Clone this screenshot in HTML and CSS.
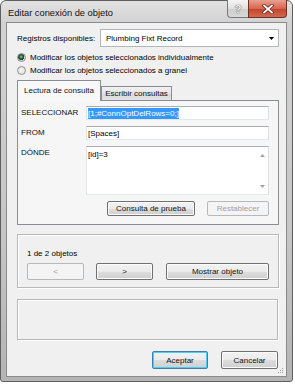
FILE: index.html
```html
<!DOCTYPE html>
<html lang="es">
  <head>
    <meta charset="UTF-8" />
    <title>Editar conexión de objeto</title>
    <link rel="stylesheet" href="styles.css">
  </head>
  <body>
    <div class="window">
      <div class="titlebar">
        <span class="title">Editar conexión de objeto</span>
        <div class="caption_buttons">
          <div class="caption help">?</div>
          <div class="caption close">
            <svg viewBox="0 0 14 10" width="14" height="10">
              <path d="M3 1.5l8 7M11 1.5l-8 7" stroke="#6b2a20" stroke-width="3.4" stroke-linecap="square" />
              <path d="M3 1.5l8 7M11 1.5l-8 7" stroke="#fff" stroke-width="1.8" stroke-linecap="square" />
            </svg>
          </div>
        </div>
      </div>

      <div class="client">
        <div class="source_row">
          <span>Registros disponibles:</span>
          <div class="combo">
            <span>Plumbing Fixt Record</span>
            <svg viewBox="0 0 5 3" width="5" height="3"><path d="M0 0h5L2.5 3z" fill="#000" /></svg>
          </div>
        </div>

        <div class="radios">
          <label class="radio"><span class="radio_dot checked"></span>Modificar los objetos seleccionados individualmente</label>
          <label class="radio"><span class="radio_dot"></span>Modificar los objetos seleccionados a granel</label>
        </div>

        <div class="tabs">
          <div class="tab active">Lectura de consulta</div>
          <div class="tab">Escribir consultas</div>
        </div>
        <div class="tab_panel">
          <div class="query_grid">
            <span class="query_label">SELECCIONAR</span>
            <div class="textbox"><span class="selection">[1;#ConnOptDelRows=0;]</span></div>
            <span class="query_label">FROM</span>
            <div class="textbox">[Spaces]</div>
            <span class="query_label">DÓNDE</span>
            <div class="textbox multiline">
              <span>[id]=3</span>
              <div class="scroll">
                <svg viewBox="0 0 5 3" width="5" height="3"><path d="M0 3h5L2.5 0z" fill="#a3a3a3" /></svg>
                <svg viewBox="0 0 5 3" width="5" height="3"><path d="M0 0h5L2.5 3z" fill="#a3a3a3" /></svg>
              </div>
            </div>
          </div>
          <div class="panel_buttons">
            <div class="button test">Consulta de prueba</div>
            <div class="button reset disabled">Restablecer</div>
          </div>
        </div>

        <div class="group nav_group">
          <div class="count">1 de 2 objetos</div>
          <div class="nav_buttons">
            <div class="button prev disabled">&lt;</div>
            <div class="button next">&gt;</div>
            <div class="button show">Mostrar objeto</div>
          </div>
        </div>

        <div class="group empty_group"></div>

        <div class="dialog_buttons">
          <div class="button ok default">Aceptar</div>
          <div class="button cancel">Cancelar</div>
        </div>

        <div class="grip">
          <svg viewBox="0 0 6 6" width="6" height="6">
            <path d="M4 0h1v1H4zM2 2h1v1H2zM4 2h1v1H4zM0 4h1v1H0zM2 4h1v1H2zM4 4h1v1H4z" fill="#a0a0a0" />
          </svg>
        </div>
      </div>
    </div>
  </body>
</html>
```

FILE: styles.css
```css
* {
  box-sizing: border-box;
  padding: 0;
  margin: 0;
}
body {
  background: #fff;
  font-family: "Liberation Sans", Arial, sans-serif;
  font-size: 8px;
  color: #000;
}
.window {
  width: 293px;
  height: 382px;
  display: flex;
  flex-direction: column;
  padding: 0 5px 4px;
  border: 1px solid #5f5f5f;
  border-radius: 6px 6px 3px 3px;
  background: linear-gradient(#e2e2e2, #d2d2d2 22px, #c6c6c6 60%, #b4b4b4);
}
.titlebar {
  height: 21px;
  display: flex;
  justify-content: space-between;
  align-items: flex-start;
}
.title {
  padding: 6px 0 0 2px;
  font-size: 9.3px;
  line-height: 12px;
  color: #111;
}
.caption_buttons {
  display: flex;
  margin-top: -1px;
}
.caption {
  height: 18px;
  display: flex;
  justify-content: center;
  align-items: center;
  border: 1px solid #7a7a7a;
  border-top: none;
}
.caption.help {
  width: 21px;
  border-right: none;
  border-radius: 0 0 0 4px;
  background: linear-gradient(#f4f4f4, #e0e0e0 50%, #cdcdcd 51%, #d8d8d8);
  font-size: 11px;
  font-weight: bold;
  color: #f4f4f4;
  text-shadow: 0 0 1px #555, 0 0 1px #555;
}
.caption.close {
  width: 39px;
  border-color: #6e2e24;
  border-radius: 0 0 4px 0;
  background: linear-gradient(#e9a08f, #d7664f 50%, #c4412a 51%, #d26a4f);
}
.client {
  flex: 1;
  position: relative;
  display: flex;
  flex-direction: column;
  padding: 6px 7px 0 10px;
  border: 1px solid #8a8a8a;
  background: #f0f0f0;
}
.source_row {
  height: 18px;
  display: flex;
  justify-content: space-between;
  align-items: center;
}
.combo {
  width: 179px;
  height: 18px;
  display: flex;
  justify-content: space-between;
  align-items: center;
  padding: 0 4px 0 5px;
  border: 1px solid #b3b6bb;
  background: #fff;
}
.radios {
  margin-top: 4px;
  display: flex;
  flex-direction: column;
}
.radio {
  height: 13px;
  display: flex;
  align-items: center;
  gap: 4px;
}
.radio_dot {
  width: 9px;
  height: 9px;
  border: 1px solid #8b8d90;
  border-radius: 50%;
  background: radial-gradient(#f6f6f6, #dcdcdc);
}
.radio_dot.checked {
  background: radial-gradient(circle at 45% 40%, #9fd98a 0, #2d6e2f 1.6px, #1f3c5a 3px, #dcdcdc 3.4px);
}
.tabs {
  margin-top: 3px;
  height: 20px;
  display: flex;
  align-items: flex-end;
  position: relative;
  z-index: 1;
}
.tab {
  height: 14px;
  display: flex;
  justify-content: center;
  align-items: center;
  width: 71px;
  border: 1px solid #898c95;
  border-bottom: none;
  background: linear-gradient(#f2f2f2, #e3e3e3 50%, #d9d9d9 51%, #e2e2e2);
  color: #111;
}
.tab.active {
  width: 84px;
  height: 21px;
  margin-bottom: -1px;
  padding-bottom: 1px;
  background: #f8f8f8;
}
.tab_panel {
  height: 125px;
  display: flex;
  flex-direction: column;
  padding: 5px 9px 0 3px;
  border: 1px solid #898c95;
  background: #f6f6f6;
}
.query_grid {
  display: grid;
  grid-template-columns: 65px 183px;
  row-gap: 6px;
}
.query_label {
  height: 14px;
  line-height: 14px;
  color: #111;
}
.textbox {
  height: 14px;
  padding: 1px 1px 0;
  line-height: 11px;
  border: 1px solid #abadb3;
  border-color: #abadb3 #dbdfe6 #e3e9ef #e2e3ea;
  background: #fff;
}
.selection {
  display: inline-block;
  background: #3399ff;
  color: #fff;
}
.textbox.multiline {
  height: 49px;
  display: flex;
  justify-content: space-between;
  padding: 2px 0 0 1px;
}
.scroll {
  width: 12px;
  display: flex;
  flex-direction: column;
  justify-content: space-between;
  align-items: center;
  padding: 5px 0 6px;
}
.scroll svg {
  display: block;
}
.panel_buttons {
  margin-top: 6px;
  display: flex;
  justify-content: flex-end;
  gap: 12px;
}
.button {
  height: 17px;
  display: flex;
  justify-content: center;
  align-items: center;
  border: 1px solid #707070;
  border-radius: 2px;
  background: linear-gradient(#f2f2f2, #ebebeb 50%, #dddddd 51%, #cfcfcf);
  box-shadow: inset 0 0 0 1px #fcfcfc;
  color: #111;
}
.button.disabled {
  border-color: #b5b9bc;
  background: #f4f4f4;
  box-shadow: none;
  color: #a0a0a0;
}
.button.default {
  border-color: #3c7fb1;
  box-shadow: inset 0 0 0 1px #48d0f8;
}
.panel_buttons .button {
  height: 15px;
}
.test {
  width: 88px;
}
.reset {
  width: 62px;
}
.group {
  border: 1px solid #b8b8b8;
  box-shadow: inset 1px 1px 0 #fff, 1px 1px 0 #fff;
}
.nav_group {
  margin-top: 9px;
  height: 54px;
  padding: 13px 9px 0;
}
.count {
  height: 11px;
  line-height: 11px;
}
.nav_buttons {
  margin-top: 4px;
  display: flex;
}
.prev,
.next {
  width: 57px;
}
.next {
  margin-left: 12px;
}
.show {
  width: 103px;
  margin-left: 13px;
}
.empty_group {
  margin-top: 11px;
  height: 41px;
  margin-right: 1px;
}
.dialog_buttons {
  margin-top: 11px;
  display: flex;
  justify-content: flex-end;
  gap: 13px;
  padding-right: 1px;
}
.dialog_buttons .button {
  height: 18px;
}
.ok {
  width: 56px;
}
.cancel {
  width: 57px;
}
.grip {
  position: absolute;
  right: 2px;
  bottom: 2px;
  display: flex;
}
```
